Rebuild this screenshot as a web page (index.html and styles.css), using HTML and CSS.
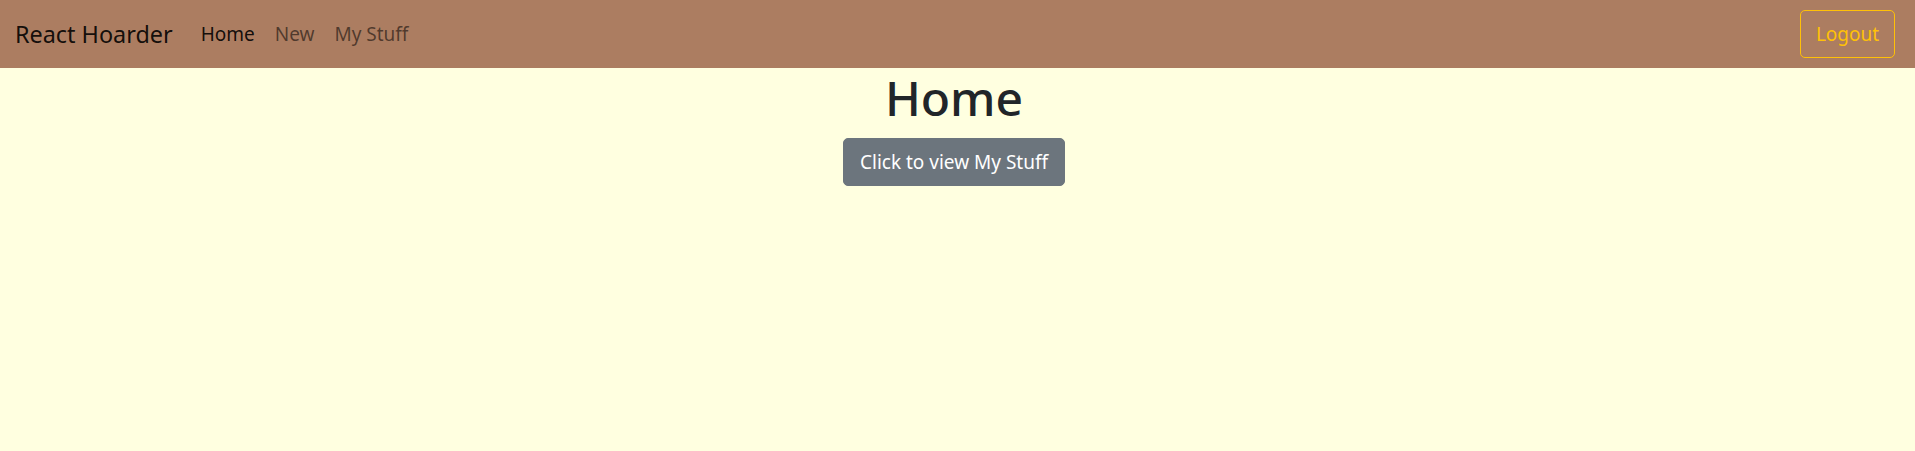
FILE: index.html
```html
<!DOCTYPE html>
<html lang="en">
<head>
<meta charset="utf-8">
<title>React Hoarder</title>
<link rel="stylesheet" href="styles.css">
</head>
<body>
<nav class="navbar">
  <a class="brand" href="#">React Hoarder</a>
  <div class="nav-links">
    <a class="nav-link active" href="#">Home</a>
    <a class="nav-link" href="#">New</a>
    <a class="nav-link" href="#">My Stuff</a>
  </div>
  <button class="btn-logout" type="button">Logout</button>
</nav>
<main class="home">
  <h1 class="title">Home</h1>
  <button class="btn-secondary" type="button">Click to view My Stuff</button>
</main>
</body>
</html>
```

FILE: styles.css
```css
* { box-sizing: border-box; }
html, body { margin: 0; padding: 0; }
body {
  background: #ffffe0;
  font-family: "Noto Sans", "Open Sans", sans-serif;
  color: #212529;
  height: 451px;
}
.navbar {
  display: flex;
  align-items: center;
  height: 68px;
  padding: 0 20px 0 15px;
  background: #ac7d61;
}
.brand {
  font-size: 23.4px;
  line-height: 30px;
  color: rgba(0,0,0,0.9);
  text-decoration: none;
  margin-right: 18px;
}
.nav-links {
  display: flex;
  flex: 1;
}
.nav-link {
  font-size: 19px;
  line-height: 28px;
  padding: 0 10px;
  color: rgba(0,0,0,0.55);
  text-decoration: none;
}
.nav-link.active { color: rgba(0,0,0,0.9); }
.btn-logout {
  font-family: inherit;
  font-size: 19px;
  height: 48px;
  width: 95px;
  padding: 0;
  background: transparent;
  color: #ffc107;
  border: 1px solid #ffc107;
  border-radius: 5px;
}
.home {
  display: flex;
  flex-direction: column;
  align-items: center;
  padding-right: 7px;
}
.title {
  margin: 0 0 10px;
  font-size: 48px;
  font-weight: 500;
  line-height: 60px;
  color: #212529;
}
.btn-secondary {
  font-family: inherit;
  font-size: 19px;
  height: 48px;
  width: 222px;
  padding: 0;
  background: #6c757d;
  color: #fff;
  border: 1px solid #6c757d;
  border-radius: 5px;
}
```
